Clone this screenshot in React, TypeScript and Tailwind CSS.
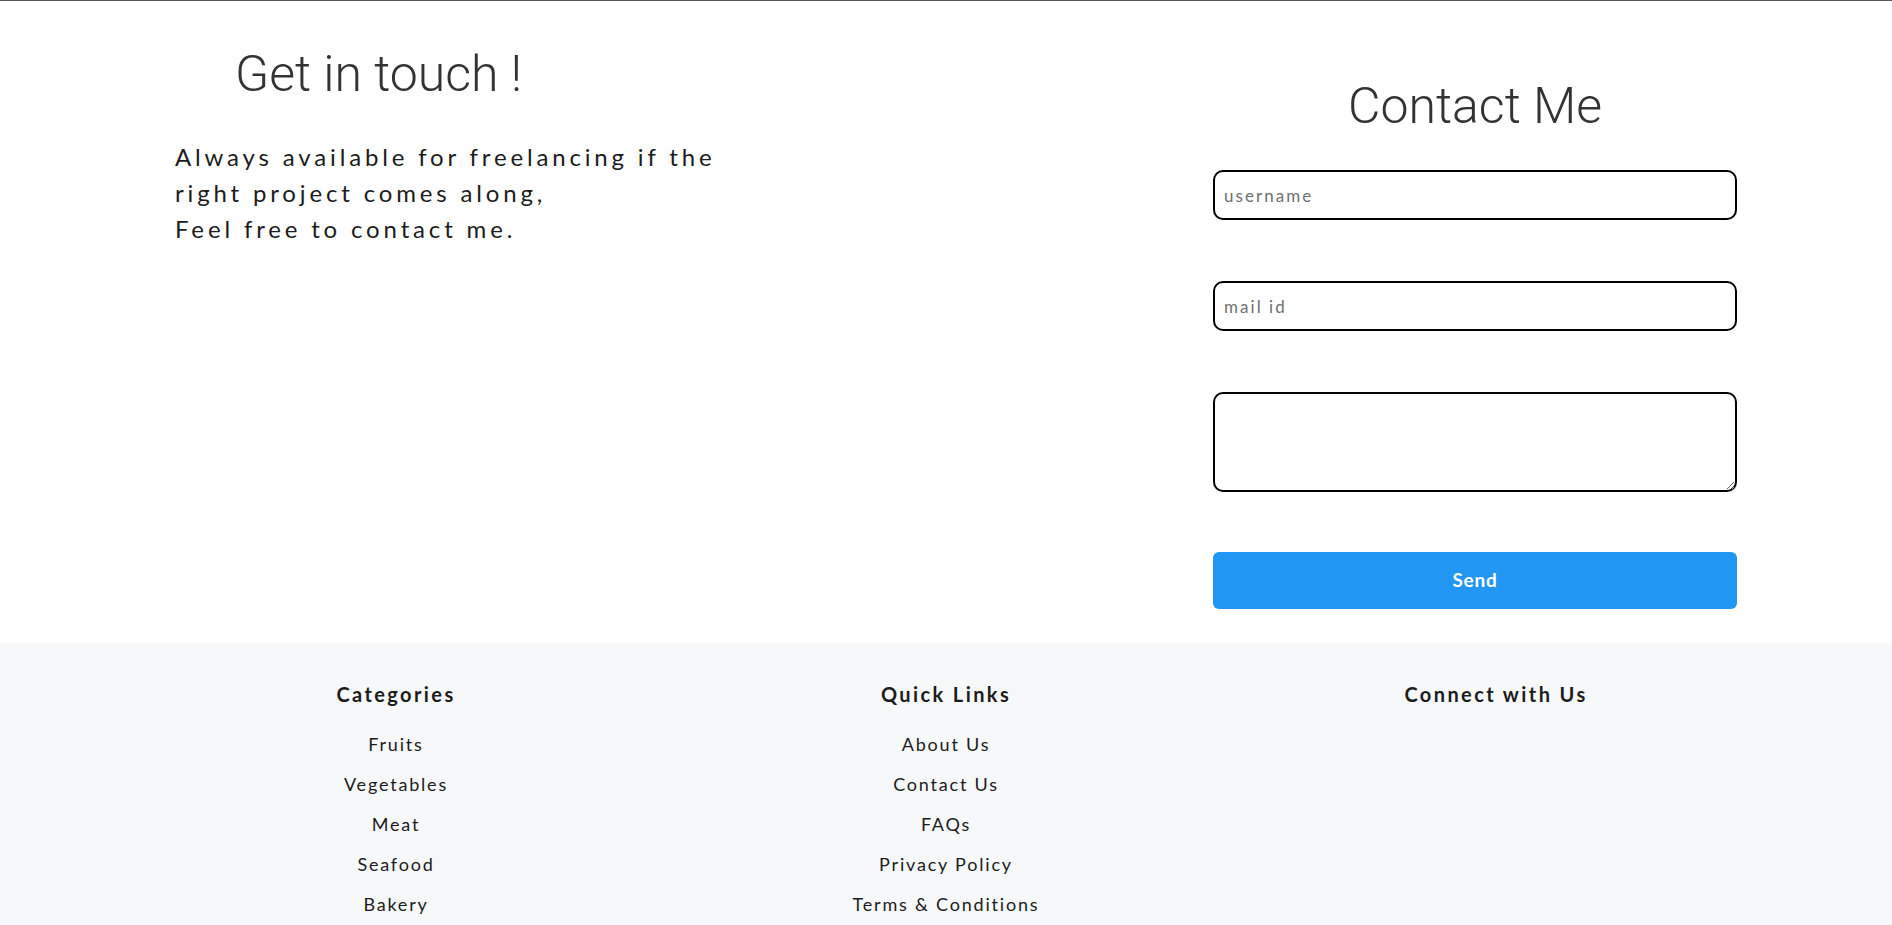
const categories = ["Fruits", "Vegetables", "Meat", "Seafood", "Bakery"]
const quickLinks = ["About Us", "Contact Us", "FAQs", "Privacy Policy", "Terms & Conditions"]

const body = "font-['Lato','DejaVu_Sans',sans-serif]"

function FooterColumn({ title, items }: { title: string; items: string[] }) {
  return (
    <div className="flex flex-col items-center">
      <h3 className="text-[20px] font-bold tracking-[0.12em] text-[#1c1c1c] leading-[30px]">{title}</h3>
      <ul className="mt-[23px] flex flex-col items-center gap-[16px]">
        {items.map(item => (
          <li key={item} className="text-[18px] leading-[24px] tracking-[0.1em] text-[#1c1c1c]">{item}</li>
        ))}
      </ul>
    </div>
  )
}

export default function App() {
  return (
    <div className={`min-h-[925px] bg-white border-t border-[#5a5a5a] ${body}`}>
      <section className="flex h-[642px]">
        <div className="w-[1038px] pl-[175px] pt-[43px]">
          <h1 className="pl-[60px] font-['Roboto',sans-serif] font-light text-[50px] leading-[60px] text-[#333]">
            Get in touch !
          </h1>
          <p className="mt-[35px] w-[570px] text-[24px] leading-[36px] tracking-[0.16em] text-[#1c1c1c]">
            Always available for freelancing if the right project comes along,
            <br />
            Feel free to contact me.
          </p>
        </div>
        <div className="w-[524px] ml-[175px]">
          <h2 className="pt-[75px] text-center font-['Roboto',sans-serif] font-light text-[50px] leading-[60px] text-[#333]">
            Contact Me
          </h2>
          <form className="mt-[34px] flex flex-col">
            <input
              placeholder="username"
              className="h-[50px] rounded-[10px] border-2 border-black px-[9px] text-[17px] tracking-[0.12em] outline-none placeholder:text-[#6f6f6f]"
            />
            <input
              placeholder="mail id"
              className="mt-[61px] h-[50px] rounded-[10px] border-2 border-black px-[9px] text-[17px] tracking-[0.12em] outline-none placeholder:text-[#6f6f6f]"
            />
            <textarea className="mt-[61px] h-[100px] rounded-[10px] border-2 border-black px-[9px] py-[6px] text-[17px] outline-none" />
            <button
              type="button"
              className="mt-[60px] h-[57px] rounded-[6px] bg-[#2196f3] text-[19px] font-bold tracking-[0.04em] text-white"
            >
              Send
            </button>
          </form>
        </div>
      </section>
      <footer className="bg-[#f7f8fa] pt-[36px] pb-[20px]">
        <div className="mx-auto grid w-[1650px] grid-cols-3">
          <FooterColumn title="Categories" items={categories} />
          <FooterColumn title="Quick Links" items={quickLinks} />
          <FooterColumn title="Connect with Us" items={[]} />
        </div>
      </footer>
    </div>
  )
}
